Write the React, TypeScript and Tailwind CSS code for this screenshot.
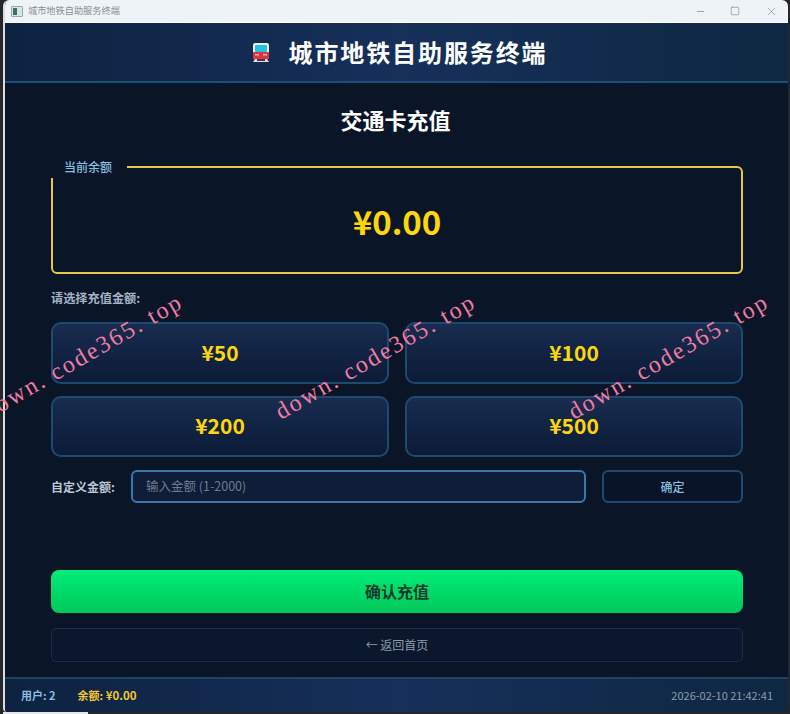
import { Minus, Square, X } from 'lucide-react'

const font = { fontFamily: '"Noto Sans CJK SC", "Noto Sans", sans-serif' }

function TrainIcon() {
  return (
    <svg width="18" height="21" viewBox="0 0 18 21">
      <rect x="1" y="1" width="16" height="16" rx="2" fill="#e8eef2" />
      <rect x="3" y="3" width="12" height="7" rx="1" fill="#22c3dc" />
      <rect x="1" y="10" width="16" height="7" rx="1" fill="#d8344a" />
      <rect x="3" y="12" width="4" height="1.5" fill="#f6b0a0" />
      <rect x="11" y="12" width="4" height="1.5" fill="#f6b0a0" />
      <path d="M3 17h12l2 3H1z" fill="#d9dee2" />
      <rect x="5" y="17" width="8" height="2" fill="#5a3040" />
    </svg>
  )
}

function Watermark({ className }: { className: string }) {
  return (
    <span
      className={`absolute z-10 pointer-events-none whitespace-nowrap origin-left -rotate-[30deg] text-[24px] leading-none tracking-[2.1px] text-[#f07ca4] font-['Liberation_Serif',serif] ${className}`}
    >
      down. code365. top
    </span>
  )
}

function AmountButton({ label }: { label: string }) {
  return (
    <button className="flex items-center justify-center rounded-[10px] border-2 border-[#1f4a70] bg-gradient-to-b from-[#182c4f] to-[#0c1b37] pb-[1px] text-[21px] font-bold text-[#ffd60a]">
      {label}
    </button>
  )
}

export default function App() {
  return (
    <div className="relative h-[714px] w-[790px] overflow-hidden bg-[#23262b]" style={font}>
      <div className="ml-[3px] mr-[2px] flex h-[712px] flex-col overflow-hidden rounded-t-[6px] rounded-b-[4px] border-l-2 border-[#d9dde0] bg-[#0a1628]">
        {/* titlebar */}
        <div className="flex h-[23px] shrink-0 items-center border-b border-white bg-[#eef3f7] pl-[6px]">
          <div className="flex h-[11px] w-[12px] items-center rounded-[1px] border border-[#9aa6a8] bg-[#d6e6e0]">
            <div className="ml-[1px] h-[7px] w-[4px] bg-[#3f6f68]" />
          </div>
          <span className="ml-[5px] text-[9.2px] leading-none text-[#8a8f94]">城市地铁自助服务终端</span>
          <div className="ml-auto flex items-center text-[#7f868c]">
            <Minus size={11} strokeWidth={1.6} className="mr-[24px]" />
            <Square size={10} strokeWidth={1.6} className="mr-[25px]" />
            <X size={13} strokeWidth={1.2} className="mr-[10px]" />
          </div>
        </div>

        {/* header */}
        <header className="flex h-[60px] shrink-0 items-center justify-center gap-[19px] border-b-2 border-[#1d5078] bg-gradient-to-r from-[#0e2240] via-[#16305a] to-[#0e2742] pl-[6px]">
          <TrainIcon />
          <h1 className="text-[24px] font-bold leading-none tracking-[1.9px] text-white">城市地铁自助服务终端</h1>
        </header>

        {/* main */}
        <main className="flex min-h-0 flex-1 flex-col bg-[#0a1628] pl-[46px] pr-[45px]">
          <h2 className="mt-[20px] h-[32px] pr-[3px] text-center text-[22px] font-bold leading-[32px] text-white">
            交通卡充值
          </h2>

          <section className="relative mt-[31px] flex h-[108px] items-center justify-center rounded-[6px] border-2 border-[#e8c84a]">
            <span className="absolute -left-[2px] -top-[8px] h-[18px] w-[76px] bg-[#0a1628] pl-[13px] text-[12px] font-medium leading-[14px] text-[#87bfe0]">
              当前余额
            </span>
            <span className="mt-[2px] text-[33px] font-bold leading-none text-[#ffd60a]">¥0.00</span>
          </section>

          <p className="mt-[15px] h-[18px] text-[12.2px] font-bold leading-[18px] text-[#a4b4c6]">请选择充值金额:</p>

          <div className="mt-[15px] grid h-[135px] grid-cols-2 grid-rows-2 gap-x-[16px] gap-y-[12px]">
            <AmountButton label="¥50" />
            <AmountButton label="¥100" />
            <AmountButton label="¥200" />
            <AmountButton label="¥500" />
          </div>

          <div className="mt-[13px] flex h-[33px] items-stretch">
            <label className="flex w-[80px] items-center text-[12px] font-bold text-[#bcc8d6]">自定义金额:</label>
            <div className="flex w-[455px] items-center rounded-[6px] border-2 border-[#3a78ac] bg-[#0f1d38] pl-[13px] text-[12.5px] text-[#6d7c8d]">
              输入金额 (1-2000)
            </div>
            <button className="ml-[16px] flex-1 rounded-[6px] border-2 border-[#1f4a70] bg-[#0a1428] text-[12px] font-medium text-[#87bfe0]">
              确定
            </button>
          </div>

          <button className="mt-[67px] h-[43px] shrink-0 rounded-[8px] bg-gradient-to-b from-[#00ec78] to-[#00c95a] pb-[2px] text-[16px] font-bold text-[#123a2a]">
            确认充值
          </button>

          <button className="mt-[15px] h-[34px] shrink-0 rounded-[5px] border border-[#1a2d48] bg-[#0b172c] text-[12px] text-[#8d9cab]">
            ← 返回首页
          </button>
        </main>

        {/* footer */}
        <footer className="flex h-[35px] shrink-0 items-center border-t-2 border-[#1d4468] bg-gradient-to-r from-[#0e2240] via-[#16305a] to-[#0e2742] pl-[16px] pr-[15px] text-[11px]">
          <span className="font-bold text-[#87bfe0]">用户: 2</span>
          <span className="ml-[22px] font-bold text-[#f2c832]">
            余额: <span className="text-[11.5px]">¥0.00</span>
          </span>
          <span className="ml-auto text-[#8d9cab]">2026-02-10 21:42:41</span>
        </footer>
      </div>

      <div className="absolute bottom-0 left-[3px] h-[2px] w-[85px] bg-[#e4e6e8]" />

      <Watermark className="-left-[16px] top-[401px]" />
      <Watermark className="left-[277px] top-[401px]" />
      <Watermark className="left-[570px] top-[401px]" />
    </div>
  )
}
